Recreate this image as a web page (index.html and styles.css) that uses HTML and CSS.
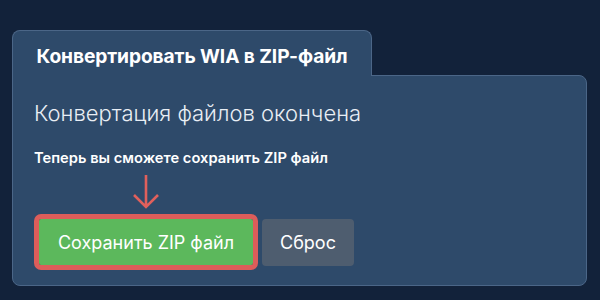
FILE: index.html
```html
<!DOCTYPE html>
<html lang="ru">
<head>
    <meta charset="UTF-8">
    <title>Конвертировать WIA в ZIP-файл</title>
    <link rel="stylesheet" href="styles.css">
</head>
<body>
    <div class="converter">
        <!-- Tab -->
        <div class="tab">Конвертировать WIA в ZIP-файл</div>

        <!-- Panel -->
        <div class="panel">
            <h2 class="panel-title">Конвертация файлов окончена</h2>
            <p class="panel-text">Теперь вы сможете сохранить ZIP файл</p>

            <div class="actions">
                <div class="save-col">
                    <svg class="arrow" width="28" height="36" viewBox="0 0 28 36">
                        <path d="M14 1 V33 M2 21 L14 33 L26 21" fill="none" stroke="#e0605c" stroke-width="2.6"/>
                    </svg>
                    <button class="btn btn-save">Сохранить ZIP файл</button>
                </div>
                <button class="btn btn-reset">Сброс</button>
            </div>
        </div>
    </div>
</body>
</html>
```

FILE: styles.css
```css
body {
    margin: 0;
    background-color: #12223a;
    font-family: Inter, "Noto Sans", sans-serif;
    color: #fff;
}

.converter {
    padding: 30px 13px 0 12px;
}

.tab {
    display: inline-block;
    width: 360px;
    height: 46px;
    box-sizing: border-box;
    padding-top: 13px;
    text-align: center;
    font-size: 19.2px;
    font-weight: 700;
    letter-spacing: -0.1px;
    background-color: #2e4a6a;
    border: 1px solid #4b6687;
    border-bottom: none;
    border-radius: 8px 8px 0 0;
    position: relative;
    z-index: 1;
    margin-bottom: -1px;
    vertical-align: top;
}

.panel {
    background-color: #2e4a6a;
    border: 1px solid #4b6687;
    border-radius: 0 8px 8px 8px;
    height: 211px;
    box-sizing: border-box;
    padding: 23px 21px 0 21px;
}

.panel-title {
    margin: 0;
    font-size: 22px;
    font-weight: 300;
    color: #e9eef4;
    line-height: 28px;
}

.panel-text {
    margin: 22px 0 0 0;
    font-size: 14.7px;
    font-weight: 600;
    line-height: 18px;
}

.actions {
    display: flex;
    align-items: flex-end;
    gap: 9px;
    margin-top: 7px;
    padding-left: 5px;
}

.save-col {
    display: flex;
    flex-direction: column;
    align-items: center;
}

.arrow {
    display: block;
    margin-bottom: 9px;
}

.btn {
    border: none;
    border-radius: 4px;
    color: #fff;
    font-family: Inter, "Noto Sans", sans-serif;
    font-size: 18px;
    font-weight: 400;
    height: 46px;
    padding: 0;
    cursor: pointer;
}

.btn-save {
    width: 214px;
    background-color: #5cb85c;
    outline: 5px solid #dc5d5a;
    border-radius: 2px;
}

.btn-reset {
    width: 92px;
    height: 47px;
    margin-bottom: -1px;
    background-color: #4e5d6f;
}
```
